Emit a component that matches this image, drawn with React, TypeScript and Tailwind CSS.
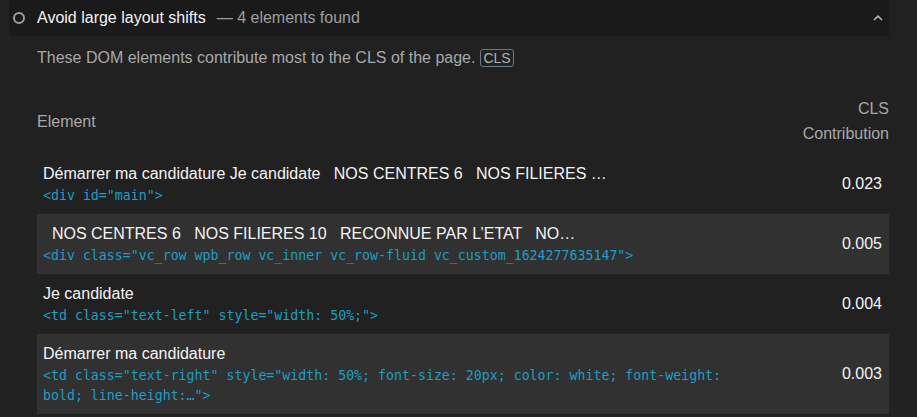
import React from "react";

const rows = [
  {
    text: "Démarrer ma candidature Je candidate   NOS CENTRES 6   NOS FILIERES …",
    code: '<div id="main">',
    value: "0.023",
    shaded: false,
  },
  {
    text: "  NOS CENTRES 6   NOS FILIERES 10   RECONNUE PAR L’ETAT   NO…",
    code: '<div class="vc_row wpb_row vc_inner vc_row-fluid vc_custom_1624277635147">',
    value: "0.005",
    shaded: true,
  },
  {
    text: "Je candidate",
    code: '<td class="text-left" style="width: 50%;">',
    value: "0.004",
    shaded: false,
  },
  {
    text: "Démarrer ma candidature",
    code: '<td class="text-right" style="width: 50%; font-size: 20px; color: white; font-weight: bold; line-height:…">',
    value: "0.003",
    shaded: true,
  },
];

export default function App() {
  return (
    <div
      className="w-[917px] h-[417px] overflow-hidden bg-[#212121] pl-[9px] pr-[28px]"
      style={{ fontFamily: '"Liberation Sans", Arial, sans-serif' }}
    >
      {/* Header bar */}
      <div className="flex items-center h-[36px] bg-[#1a1a1a] pl-[4px] pr-[3px]">
        <span className="block w-[12px] h-[12px] rounded-full border-2 border-[#9e9e9e] shrink-0" />
        <span className="ml-[12px] text-[16px] leading-[24px] text-[#f3f3f3]">
          Avoid large layout shifts
        </span>
        <span className="ml-[11px] text-[16px] leading-[24px] text-[#9e9e9e]">
          — 4 elements found
        </span>
        <span className="ml-auto flex items-center justify-center w-[16px] h-[16px]">
          <svg width="10" height="6" viewBox="0 0 10 6" fill="none">
            <path d="M1 5 L5 1.2 L9 5" stroke="#b5b5b5" strokeWidth="1.6" />
          </svg>
        </span>
      </div>

      <div className="pl-[28px]">
        {/* Description */}
        <div className="mt-[10px] flex items-center text-[16px] leading-[24px] text-[#a8a8a8]">
          <span>These DOM elements contribute most to the CLS of the page.</span>
          <span className="ml-[5px] border border-[#6f7a86] rounded-[3px] px-[2px] text-[14px] leading-[16px] text-[#b0b0b0]">
            CLS
          </span>
        </div>

        {/* Table header */}
        <div className="mt-[18px] flex items-center py-[8px] text-[16px] leading-[25px] text-[#a8a8a8]">
          <div className="flex-1">Element</div>
          <div className="text-right">
            <div>CLS</div>
            <div>Contribution</div>
          </div>
        </div>

        {/* Rows */}
        {rows.map((r, i) => (
          <div
            key={i}
            className={
              r.shaded
                ? "flex items-center bg-[#313131] py-[8px] pl-[6px] pr-[7px]"
                : "flex items-center py-[8px] pl-[6px] pr-[7px]"
            }
          >
            <div className="flex-1 min-w-0">
              <div className="text-[16px] leading-[24px] text-[#f3f3f3] whitespace-pre">
                {r.text}
              </div>
              <div
                className="max-w-[710px] text-[13.25px] leading-[20px] text-[#1a9fc6]"
                style={{ fontFamily: '"DejaVu Sans Mono", "Liberation Mono", monospace' }}
              >
                {r.code}
              </div>
            </div>
            <div className="text-[16px] leading-[24px] text-[#f3f3f3] text-right">
              {r.value}
            </div>
          </div>
        ))}
      </div>
    </div>
  );
}
